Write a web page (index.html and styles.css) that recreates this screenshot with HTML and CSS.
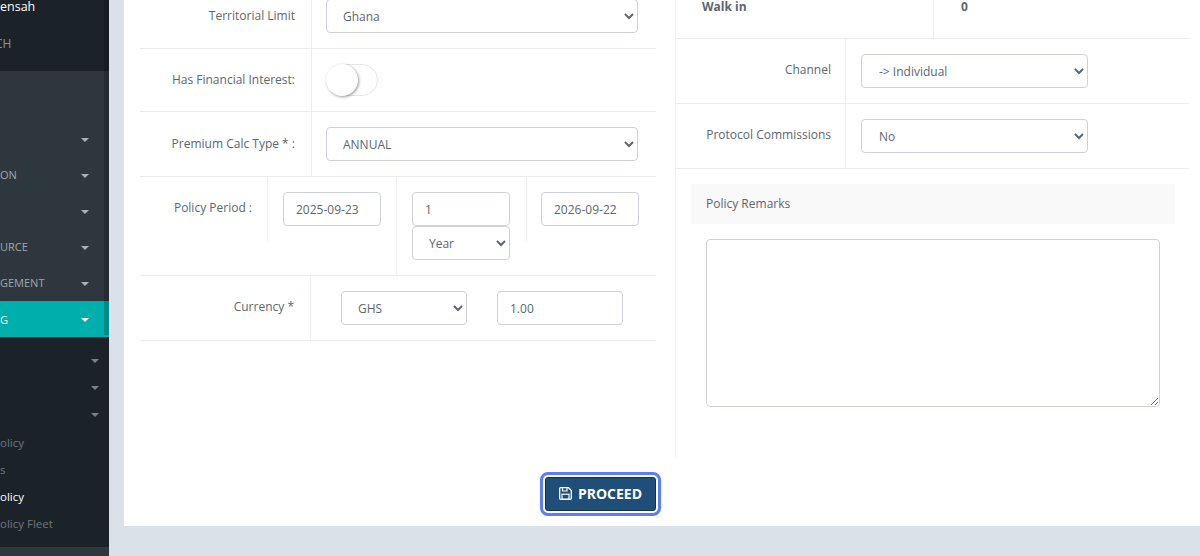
FILE: index.html
```html
<!DOCTYPE html>
<html lang="en">
<head>
    <meta charset="UTF-8">
    <meta name="viewport" content="width=device-width, initial-scale=1.0">
    <title>Policy Entry</title>
    <link rel="stylesheet" href="styles.css">
</head>
<body>
    <aside class="sidebar">
        <div class="user-panel">
            <div class="user-name">ensah</div>
            <div class="user-branch">CH</div>
        </div>

        <nav class="main-nav">
            <a class="nav-item"><span></span><i class="caret"></i></a>
            <a class="nav-item"><span>ON</span><i class="caret"></i></a>
            <a class="nav-item"><span></span><i class="caret"></i></a>
            <a class="nav-item"><span>URCE</span><i class="caret"></i></a>
            <a class="nav-item"><span>GEMENT</span><i class="caret"></i></a>
            <a class="nav-item active"><span>G</span><i class="caret"></i></a>
        </nav>

        <div class="sub-nav">
            <a class="sub-item"><span></span><i class="caret"></i></a>
            <a class="sub-item"><span></span><i class="caret"></i></a>
            <a class="sub-item"><span></span><i class="caret"></i></a>
            <a class="sub-item"><span>olicy</span></a>
            <a class="sub-item"><span>s</span></a>
            <a class="sub-item current"><span>olicy</span></a>
            <a class="sub-item"><span>olicy Fleet</span></a>
        </div>

        <div class="sidebar-end"></div>
        <div class="sidebar-scroll"></div>
    </aside>

    <main class="content">
        <div class="card">
            <div class="columns">
                <section class="col-left">
                    <div class="row row-territory">
                        <label class="row-label">Territorial Limit</label>
                        <div class="row-field">
                            <select class="control first-control"><option>Ghana</option></select>
                        </div>
                    </div>

                    <div class="row row-interest">
                        <label class="row-label">Has Financial Interest:</label>
                        <div class="row-field">
                            <span class="switch"><span class="knob"></span></span>
                        </div>
                    </div>

                    <div class="row row-calc">
                        <label class="row-label">Premium Calc Type * :</label>
                        <div class="row-field">
                            <select class="control"><option>ANNUAL</option></select>
                        </div>
                    </div>

                    <div class="row row-period">
                        <div class="period-cell period-label">Policy Period :</div>
                        <div class="period-cell period-start">
                            <input class="control" type="text" value="2025-09-23">
                        </div>
                        <div class="period-cell period-mid">
                            <input class="control" type="text" value="1">
                            <select class="control"><option>Year</option></select>
                        </div>
                        <div class="period-cell period-last">
                            <input class="control" type="text" value="2026-09-22">
                        </div>
                    </div>

                    <div class="row row-currency">
                        <label class="row-label">Currency *</label>
                        <div class="row-field currency-fields">
                            <select class="control"><option>GHS</option></select>
                            <input class="control" type="text" value="1.00">
                        </div>
                    </div>
                </section>

                <section class="col-right">
                    <div class="row row-walkin">
                        <div class="walkin-name">Walk in</div>
                        <div class="walkin-value">0</div>
                    </div>

                    <div class="row row-right">
                        <label class="row-label">Channel</label>
                        <div class="row-field">
                            <select class="control"><option>-&gt; Individual</option></select>
                        </div>
                    </div>

                    <div class="row row-right">
                        <label class="row-label">Protocol Commissions</label>
                        <div class="row-field">
                            <select class="control"><option>No</option></select>
                        </div>
                    </div>

                    <div class="remarks">
                        <div class="remarks-head">Policy Remarks</div>
                        <textarea class="remarks-text"></textarea>
                    </div>
                </section>
            </div>

            <div class="actions">
                <button type="button" class="proceed-btn">
                    <svg class="save-icon" viewBox="0 0 13 13" width="13" height="13">
                        <path d="M1.5 .7h8l2.8 2.8v7.8a1 1 0 0 1-1 1H1.5a.8.8 0 0 1-.8-.8V1.5a.8.8 0 0 1 .8-.8z" fill="none" stroke="currentColor" stroke-width="1.3"/>
                        <path d="M3.5 1v3h4.5V1" fill="none" stroke="currentColor" stroke-width="1.2"/>
                        <rect x="3" y="7.2" width="7" height="5" fill="none" stroke="currentColor" stroke-width="1.2"/>
                    </svg>
                    PROCEED
                </button>
            </div>
        </div>
    </main>
</body>
</html>
```

FILE: styles.css
```css
* {
    margin: 0;
    padding: 0;
    box-sizing: border-box;
}

html, body {
    height: 556px;
    overflow: hidden;
}

body {
    font-family: 'Open Sans', 'Noto Sans', sans-serif;
    font-size: 12px;
    color: #5c6670;
    background: #dbe1e9;
    display: flex;
}

/* sidebar, cut off on the left like the original scroll position */
.sidebar {
    width: 109px;
    flex-shrink: 0;
    background: #1b2329;
    display: flex;
    flex-direction: column;
    position: relative;
}

.sidebar-scroll {
    position: absolute;
    top: 0;
    right: 0;
    height: 335px;
    width: 5px;
    background: rgba(0, 0, 0, 0.2);
}

.user-panel {
    height: 71px;
}

.user-name {
    font-size: 12.5px;
    line-height: 14px;
    color: #fff;
}

.user-branch {
    font-size: 12px;
    color: #8b9298;
    line-height: 16px;
    margin: 22px 0 0 -5px;
}

.main-nav {
    height: 266px;
    padding-top: 50px;
    background: #2f373e;
}

.nav-item {
    height: 36px;
    display: flex;
    align-items: center;
    justify-content: space-between;
    padding-right: 20px;
    font-size: 11px;
    color: #a0a6ab;
}

.nav-item span {
    margin-top: -2px;
}

.nav-item .caret {
    margin-top: 2px;
}

.nav-item.active {
    background: #00aeac;
    color: #fff;
}

.nav-item.active span {
    margin-top: 0;
}

.caret {
    width: 0;
    height: 0;
    border-left: 4px solid transparent;
    border-right: 4px solid transparent;
    border-top: 4px solid #a9afb3;
}

.nav-item.active .caret {
    border-top-color: #fff;
}

.sub-nav {
    flex: 1;
    padding-top: 10px;
}

.sub-item {
    height: 27.2px;
    display: flex;
    align-items: center;
    justify-content: space-between;
    padding-right: 10px;
    font-size: 11.5px;
    color: #6f767c;
}

.sub-item .caret {
    border-top-color: #7b8186;
}

.sub-item.current {
    color: #fff;
}

.sidebar-end {
    height: 9px;
    background: #2f373e;
}

/* main card */
.content {
    flex: 1;
    padding: 0 0 30px 15px;
}

.card {
    height: 526px;
    background: #fff;
    padding-left: 16px;
}

.columns {
    display: flex;
    height: 457px;
}

.col-left {
    width: 516px;
}

.col-right {
    width: 515px;
    margin-left: 19px;
    border-left: 1px solid #eee;
}

.row {
    display: flex;
    border-bottom: 1px solid #eee;
}

.row-label {
    width: 172px;
    flex-shrink: 0;
    padding: 0 16px;
    text-align: right;
    border-right: 1px solid #eee;
    line-height: 18px;
}

.row-field {
    flex: 1;
    padding: 15px 0 15px 14px;
}

.control {
    font-family: inherit;
    font-size: 12px;
    color: #5c6670;
    height: 34px;
    background: #fff;
    border: 1px solid #ced2d8;
    border-radius: 4px;
    padding: 0 12px;
    display: block;
}

.row-field > .control {
    width: 312px;
}

.row-territory {
    height: 49px;
}

.row-territory .row-label {
    padding-top: 7px;
}

.row-territory .row-field {
    padding-top: 0;
}

.first-control {
    margin-top: -1px;
}

.row-interest {
    height: 63px;
}

.row-interest .row-label {
    padding-top: 22px;
}

.switch {
    display: block;
    width: 52px;
    height: 32px;
    border: 1px solid #e6e6e6;
    border-radius: 16px;
    background: #fff;
    position: relative;
}

.knob {
    position: absolute;
    left: -1px;
    top: -1px;
    width: 32px;
    height: 32px;
    border-radius: 50%;
    background: #fff;
    box-shadow: 1px 1px 3px rgba(0, 0, 0, 0.4);
}

.row-calc {
    height: 65px;
}

.row-calc .row-label {
    padding-top: 23px;
}

.row-period {
    height: 99px;
    align-items: flex-start;
}

.period-cell {
    height: 64px;
    padding: 15px 15px 0;
    width: 129px;
}

.period-cell .control {
    width: 98px;
}

.period-label {
    width: 128px;
    padding: 22px 15px 0 0;
    text-align: right;
    line-height: 18px;
    border-right: 1px solid #eee;
}

.period-start {
    width: 128px;
}

.period-mid {
    height: 98px;
    width: 130px;
    border-left: 1px solid #eee;
}

.period-last {
    border-left: 1px solid #eee;
    padding-left: 14px;
}

.row-currency {
    height: 65px;
}

.row-currency .row-label {
    width: 171px;
    padding-top: 22px;
}

.currency-fields {
    display: flex;
    gap: 30px;
    padding-left: 30px;
}

.currency-fields .control {
    width: 126px;
}

.row-walkin {
    height: 39px;
    font-weight: 700;
}

.walkin-name {
    width: 258px;
    padding: 0 0 0 26px;
    border-right: 1px solid #eee;
    line-height: 14px;
}

.walkin-value {
    padding-left: 27px;
    line-height: 14px;
}

.row-right {
    height: 65px;
}

.row-right .row-label {
    width: 170px;
    padding: 22px 14px 0 0;
}

.row-right .row-field {
    padding-left: 15px;
}

.row-right .row-field > .control {
    width: 227px;
    padding-left: 13px;
}

.remarks {
    padding: 15px 15px 0;
}

.remarks-head {
    height: 40px;
    line-height: 40px;
    padding-left: 15px;
    background: #f9f9f9;
    margin-bottom: 15px;
}

.remarks-text {
    display: block;
    width: 454px;
    height: 168px;
    margin-left: 15px;
    border: 1px solid #ced2d8;
    border-radius: 4px;
    background: #fff;
}

/* bottom action */
.actions {
    padding: 20px 0 0 405px;
}

.proceed-btn {
    display: flex;
    align-items: center;
    gap: 6px;
    width: 111px;
    height: 34px;
    padding-bottom: 1px;
    justify-content: center;
    font-family: inherit;
    font-size: 14px;
    font-weight: 700;
    color: #fff;
    background: #1f4e79;
    border: 1px solid #14314d;
    border-radius: 3px;
    outline: 3px solid #5b7cfb;
    outline-offset: 2px;
}

.save-icon {
    flex-shrink: 0;
}
```
